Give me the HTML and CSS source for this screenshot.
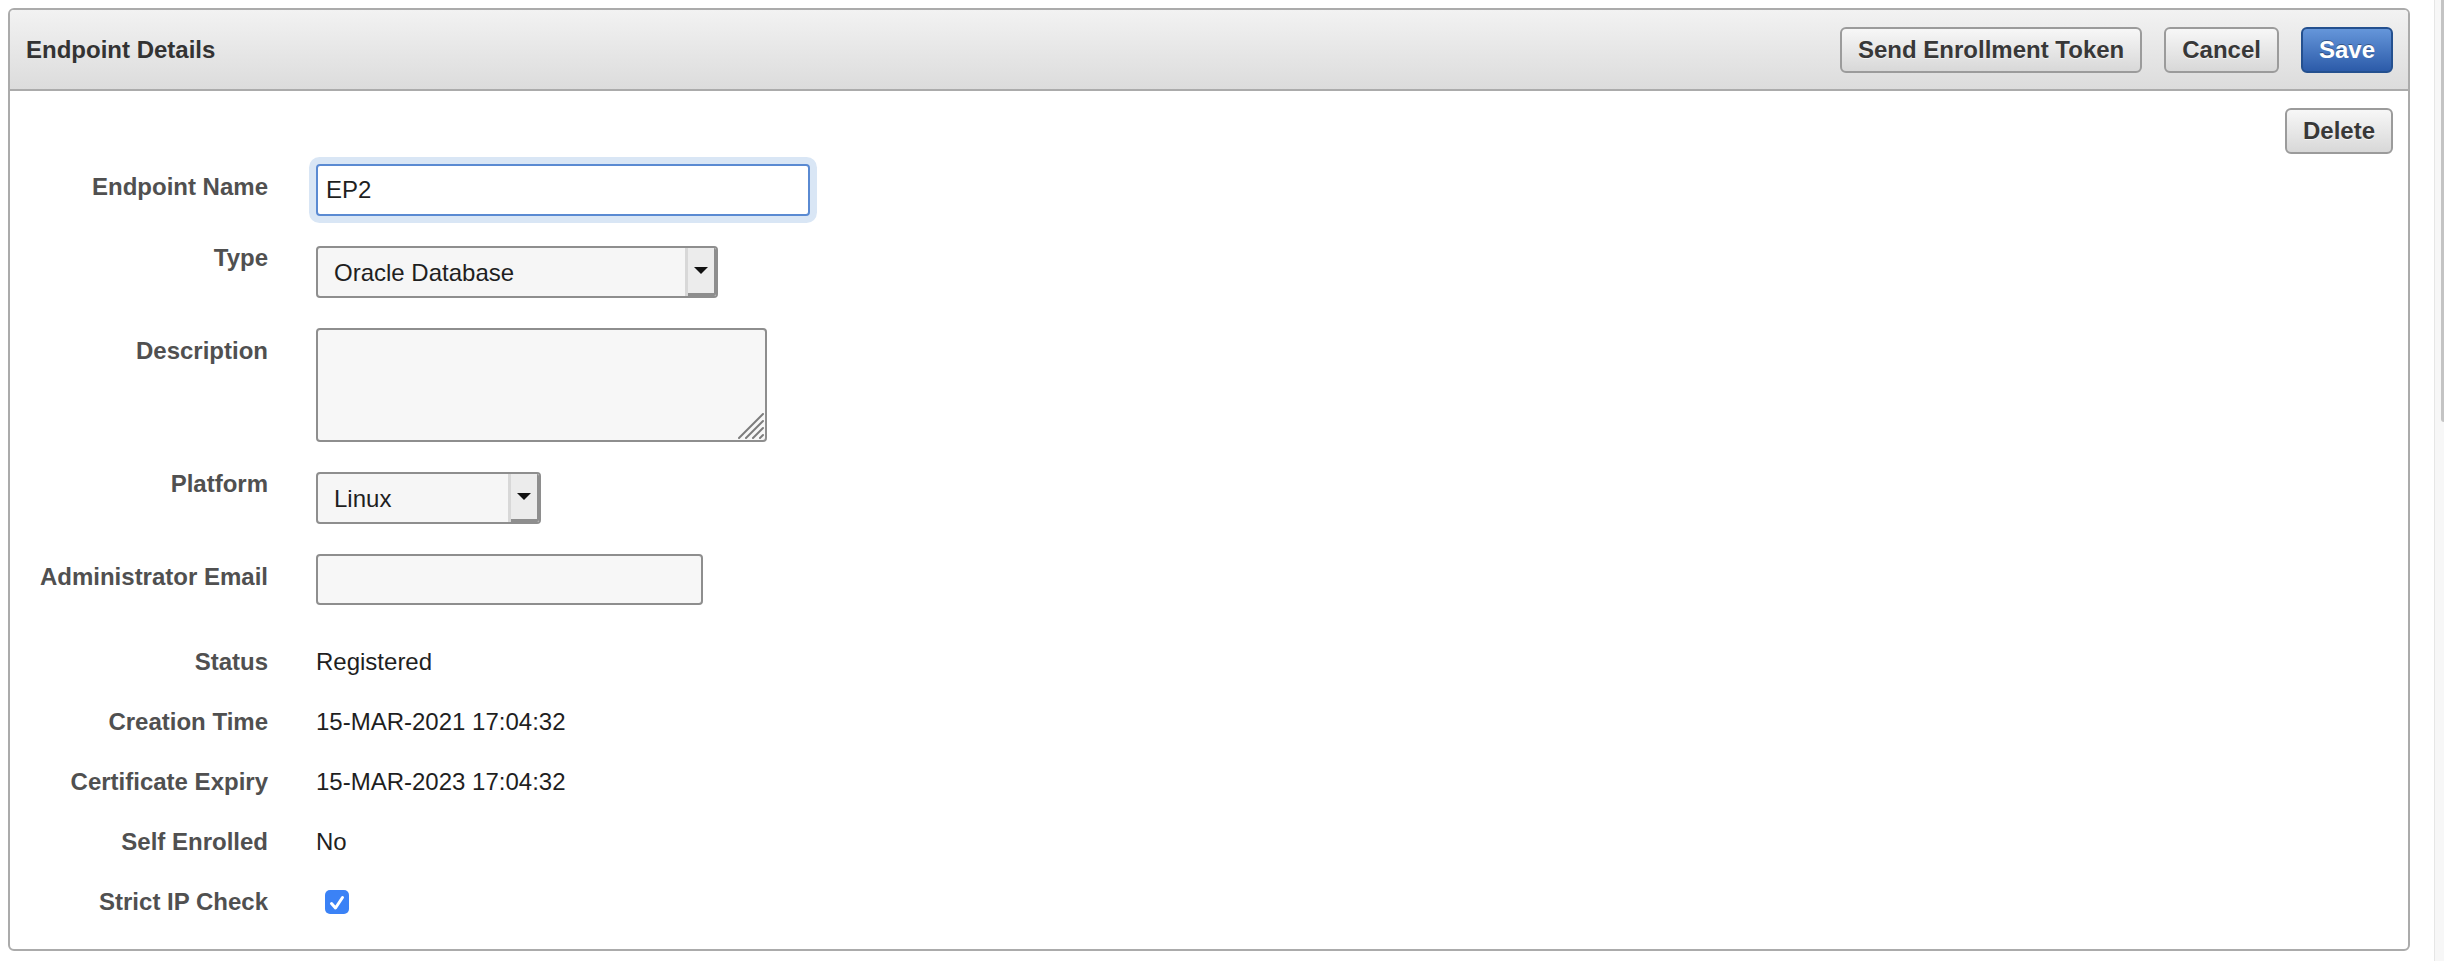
FILE: index.html
```html
<!DOCTYPE html>
<html lang="en">

<head>
    <meta charset="UTF-8">
    <meta name="viewport" content="width=device-width, initial-scale=1.0">
    <title>Endpoint Details</title>
    <link rel="stylesheet" href="styles.css">
</head>

<body>
    <div class="region">
        <div class="region-header">
            <h2 class="region-title">Endpoint Details</h2>
            <div class="region-buttons">
                <button type="button" class="button">Send Enrollment Token</button>
                <button type="button" class="button">Cancel</button>
                <button type="button" class="button button-hot">Save</button>
            </div>
        </div>

        <div class="region-body">
            <div class="body-buttons">
                <button type="button" class="button">Delete</button>
            </div>

            <form class="form">
                <!-- editable items -->
                <div class="form-edit">
                    <div class="row">
                        <label class="label" for="epName">Endpoint Name</label>
                        <input type="text" id="epName" class="text-field name-field is-focused" value="EP2">
                    </div>
                    <div class="row">
                        <label class="label label-select" for="epType">Type</label>
                        <div class="select type-select">
                            <select id="epType">
                                <option>Oracle Database</option>
                            </select>
                            <span class="select-btn"></span>
                        </div>
                    </div>
                    <div class="row">
                        <label class="label" for="epDesc">Description</label>
                        <div class="textarea-wrap">
                            <textarea id="epDesc" class="textarea"></textarea>
                            <svg class="grip" width="26" height="26" viewBox="0 0 26 26">
                                <g stroke="#7c7c7c" stroke-width="2" stroke-linecap="round">
                                    <line x1="1" y1="25" x2="25" y2="1" />
                                    <line x1="8" y1="25" x2="25" y2="8" />
                                    <line x1="15" y1="25" x2="25" y2="15" />
                                    <line x1="22" y1="25" x2="25" y2="22" />
                                </g>
                            </svg>
                        </div>
                    </div>
                    <div class="row">
                        <label class="label label-select" for="epPlatform">Platform</label>
                        <div class="select platform-select">
                            <select id="epPlatform">
                                <option>Linux</option>
                            </select>
                            <span class="select-btn"></span>
                        </div>
                    </div>
                    <div class="row">
                        <label class="label" for="epEmail">Administrator Email</label>
                        <input type="text" id="epEmail" class="text-field email-field" value="">
                    </div>
                </div>

                <!-- display only items -->
                <div class="form-display">
                    <div class="row">
                        <span class="label label-text">Status</span>
                        <span class="value">Registered</span>
                    </div>
                    <div class="row">
                        <span class="label label-text">Creation Time</span>
                        <span class="value">15-MAR-2021 17:04:32</span>
                    </div>
                    <div class="row">
                        <span class="label label-text">Certificate Expiry</span>
                        <span class="value">15-MAR-2023 17:04:32</span>
                    </div>
                    <div class="row">
                        <span class="label label-text">Self Enrolled</span>
                        <span class="value">No</span>
                    </div>
                    <div class="row">
                        <span class="label label-text">Strict IP Check</span>
                        <span class="checkbox" role="checkbox" aria-checked="true">
                            <svg width="24" height="24" viewBox="0 0 24 24">
                                <path d="M6.5 13.5 L10.5 18 L17.5 7.5" fill="none" stroke="#fff" stroke-width="3"
                                    stroke-linecap="round" stroke-linejoin="round" />
                            </svg>
                        </span>
                    </div>
                </div>
            </form>
        </div>
    </div>

    <div class="scroll-track"><span class="scroll-thumb"></span></div>
</body>

</html>
```

FILE: styles.css
```css
html,
body {
    margin: 0;
}

body {
    margin: 8px 34px 8px 8px;
    font-family: "Liberation Sans", Arial, Helvetica, sans-serif;
    font-size: 24px;
    color: #222;
    background: #fff;
}

/* region */
.region {
    border: 2px solid #ababab;
    border-radius: 6px;
    background: #fff;
}

.region-header {
    display: flex;
    align-items: center;
    justify-content: space-between;
    height: 79px;
    padding: 0 15px 0 16px;
    border-bottom: 2px solid #ababab;
    border-radius: 4px 4px 0 0;
    background: linear-gradient(#f2f2f2, #dcdcdc);
}

.region-title {
    margin: 0;
    font-size: 24px;
    font-weight: bold;
    color: #333;
}

.region-buttons {
    display: flex;
    gap: 22px;
}

.region-body {
    padding: 17px 15px 35px 0;
}

.body-buttons {
    display: flex;
    justify-content: flex-end;
}

/* buttons */
.button {
    height: 46px;
    padding: 0 16px;
    border: 2px solid #9b9b9b;
    border-radius: 6px;
    background: linear-gradient(#f7f7f7, #d8d8d8);
    font-family: inherit;
    font-size: 24px;
    font-weight: bold;
    color: #383838;
    text-shadow: 0 1px 0 rgba(255, 255, 255, 0.6);
    cursor: pointer;
}

.button-hot {
    border-color: #24508f;
    background: linear-gradient(#6596da, #2c5ba9);
    color: #fff;
    text-shadow: 0 -1px 0 rgba(0, 0, 0, 0.35);
}

/* form layout */
.form {
    margin-top: 10px;
}

.form-edit {
    display: flex;
    flex-direction: column;
    gap: 30px;
}

.form-display {
    display: flex;
    flex-direction: column;
    gap: 36px;
    margin-top: 45px;
}

.row {
    display: flex;
    align-items: flex-start;
}

.label {
    flex: 0 0 258px;
    margin-right: 48px;
    padding-top: 11px;
    text-align: right;
    line-height: 24px;
    font-weight: bold;
    color: #505050;
}

.label-select,
.label-text {
    padding-top: 0;
}

.value {
    line-height: 24px;
    color: #1f1f1f;
}

/* fields */
.text-field {
    box-sizing: border-box;
    height: 52px;
    padding: 0 8px;
    border: 2px solid #8e8e8e;
    border-radius: 4px;
    background: #f7f7f7;
    font-family: inherit;
    font-size: 24px;
    color: #1f1f1f;
    outline: none;
}

.name-field {
    width: 494px;
}

.email-field {
    width: 387px;
    height: 51px;
}

.is-focused {
    border-color: #5a8ad2;
    background: #fff;
    box-shadow: 0 0 0 7px #d9e6f5;
}

.select {
    box-sizing: border-box;
    display: flex;
    height: 52px;
    border: 2px solid #8e8e8e;
    border-radius: 4px;
    background: #f6f6f6;
    overflow: hidden;
}

.select select {
    flex: 1;
    min-width: 0;
    padding: 0 0 0 16px;
    border: 0;
    background: transparent;
    font-family: inherit;
    font-size: 24px;
    color: #1f1f1f;
    -webkit-appearance: none;
    appearance: none;
    outline: none;
}

.select-btn {
    box-sizing: border-box;
    display: flex;
    align-items: center;
    justify-content: center;
    width: 31px;
    border-left: 3px solid #d8d8d8;
    background: #ececec;
    box-shadow: inset -2px -3px 0 #8e8e8e;
}

.select-btn::after {
    content: "";
    margin: -4px 0 0 -2px;
    border-top: 7px solid #111;
    border-left: 7px solid transparent;
    border-right: 7px solid transparent;
}

.type-select {
    width: 402px;
}

.platform-select {
    width: 225px;
}

.textarea-wrap {
    position: relative;
    width: 451px;
    height: 114px;
}

.textarea {
    box-sizing: border-box;
    display: block;
    width: 100%;
    height: 100%;
    border: 2px solid #8e8e8e;
    border-radius: 4px;
    background: #f7f7f7;
    resize: none;
    outline: none;
}

.grip {
    position: absolute;
    right: 3px;
    bottom: 3px;
}

.checkbox {
    display: inline-flex;
    width: 24px;
    height: 24px;
    margin-left: 9px;
    border-radius: 5px;
    background: #3b82f6;
}

/* window scrollbar edge */
.scroll-track {
    position: fixed;
    top: 0;
    right: 0;
    bottom: 0;
    width: 9px;
    border-left: 1px solid #e6e6e6;
    background: #f7f7f7;
}

.scroll-thumb {
    position: absolute;
    top: 0;
    right: 0;
    width: 3px;
    height: 422px;
    border-radius: 0 0 0 3px;
    background: #c4c4c4;
}
```
